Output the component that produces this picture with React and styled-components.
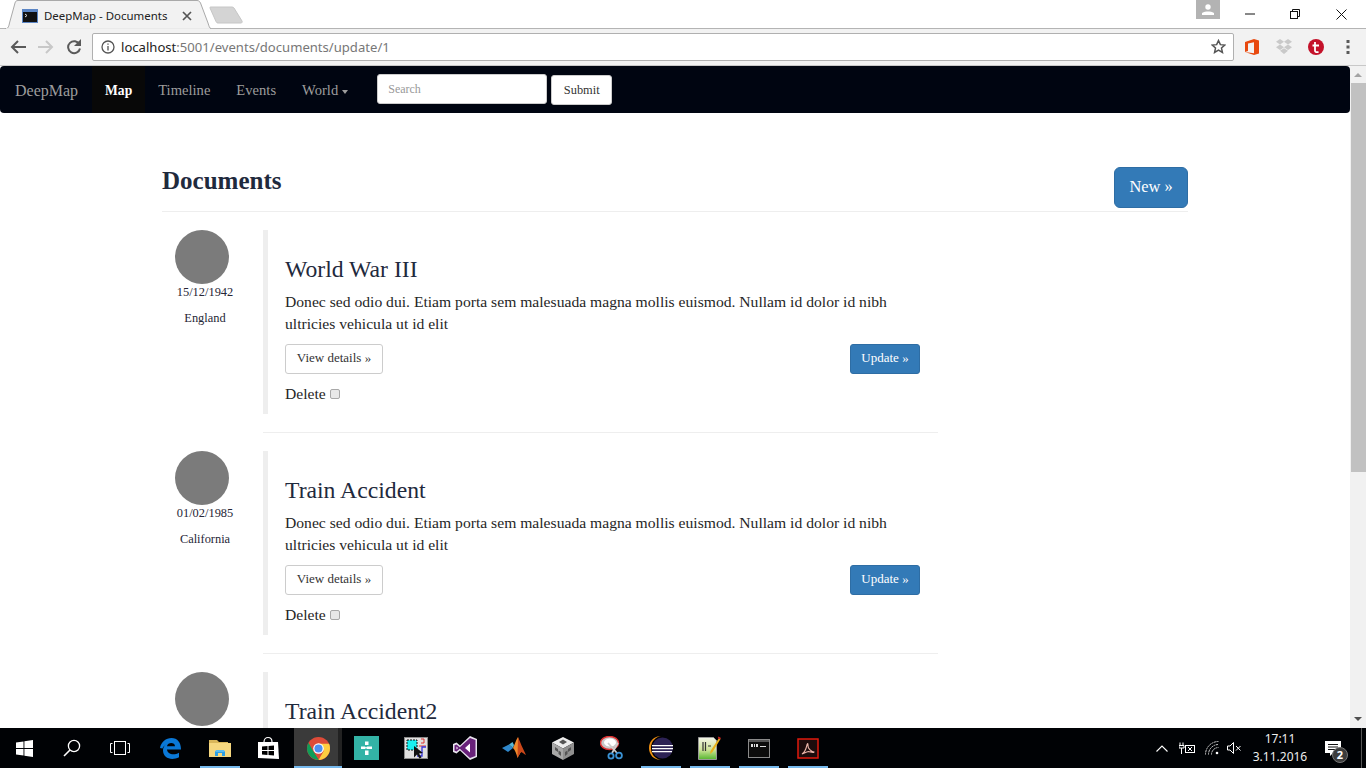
import React from "react";
import styled, { createGlobalStyle } from "styled-components";

const Global = createGlobalStyle`
  html, body { margin: 0; padding: 0; height: 100%; overflow: hidden; background: #fff; }
  #root { height: 100%; }
  * { box-sizing: border-box; }
`;

const serif = `"Liberation Serif", "Times New Roman", serif`;
const ui = `"Noto Sans", "Open Sans", sans-serif`;

const Screen = styled.div`
  width: 1366px; height: 768px; display: flex; flex-direction: column; overflow: hidden; background: #fff;
`;

/* browser chrome */
const TabStrip = styled.div`
  height: 29px; flex: none; display: flex; background: #fff; border-bottom: 1px solid #b4b4b4;
`;
const Tab = styled.div`
  position: relative; width: 206px; height: 29px; margin-left: 5px; display: flex; align-items: center;
  padding: 2px 0 0 17px; flex: none;
`;
const TabShape = styled.svg`
  position: absolute; left: 0; top: 0; width: 206px; height: 29px;
`;
const TabFavicon = styled.svg`
  position: relative; width: 16px; height: 14px; flex: none;
`;
const TabTitle = styled.span`
  position: relative; margin-left: 6px; font: 11.45px ${ui}; color: #222; width: 126px; white-space: nowrap;
`;
const TabClose = styled.svg`
  position: relative; width: 10px; height: 10px; margin-left: 12px;
`;
const NewTab = styled.svg`
  width: 36px; height: 18px; margin: 6px 0 0 -2px; flex: none;
`;
const WindowArea = styled.div`
  margin-left: auto; margin-right: 2px; display: flex; height: 28px;
`;
const Avatar = styled.div`
  width: 24px; height: 19px; background: #b3b3b3; display: flex; align-items: center; justify-content: center; margin-right: 6px;
`;
const WinBtn = styled.div`
  width: 46px; height: 28px; display: flex; align-items: center; justify-content: center; padding-left: ${p => p.$nudge || 0}px;
`;

const Toolbar = styled.div`
  height: 37px; flex: none; background: #f2f2f2; border-bottom: 1px solid #c8c8c8; display: flex; align-items: center;
  padding: 0 2px 1px 4px;
`;
const NavBtn = styled.div`
  width: 28px; height: 28px; display: flex; align-items: center; justify-content: center; flex: none;
`;
const Omnibox = styled.div`
  flex: 1; height: 28px; margin: 0 2px 0 4px; background: #fff; border: 1px solid #b0b0b0; border-radius: 2px;
  display: flex; align-items: center; padding: 0 7px 0 8px; font: 13.1px ${ui}; color: #777;
`;
const Host = styled.span` color: #222; `;
const Url = styled.span` margin-left: 6px; flex: 1; white-space: nowrap; `;
const ExtBtn = styled.div`
  width: 32px; height: 28px; display: flex; align-items: center; justify-content: center; flex: none;
`;

/* page */
const Viewport = styled.div`
  flex: 1; min-height: 0; display: flex; overflow: hidden;
`;
const Page = styled.div`
  flex: 1; min-width: 0; overflow: hidden; font-family: ${serif}; color: #262626;
`;
const Navbar = styled.nav`
  height: 47px; background: #000511; border-radius: 4px; display: flex; align-items: stretch; font-size: 14.6px;
`;
const Brand = styled.a`
  padding: 2px 14px 0 15px; font-size: 16px; color: #9d9d9d; display: flex; align-items: center; width: 92px;
`;
const NavLink = styled.a`
  padding: 2px 13px 0; display: flex; align-items: center; gap: 4px;
  color: ${p => (p.$active ? "#fff" : "#9d9d9d")};
  background: ${p => (p.$active ? "#080808" : "transparent")};
  font-weight: ${p => (p.$active ? 700 : 400)};
  font-size: ${p => (p.$active ? "13.6px" : "inherit")};
`;
const Caret = styled.span`
  width: 0; height: 0; border-top: 4px solid #9d9d9d; border-left: 3px solid transparent; border-right: 3px solid transparent; margin-top: 2px;
`;
const SearchForm = styled.form`
  display: flex; align-items: center; margin-left: 16px; gap: 4px;
`;
const SearchInput = styled.input`
  width: 170px; height: 30px; border: 1px solid #ccc; border-radius: 3px; padding: 0 10px; font: 12px ${serif}; background: #fff; margin-top: -1px;
  &::placeholder { color: #999; opacity: 1; }
`;
const SubmitBtn = styled.button`
  width: 61px; height: 30px; background: #fff; border: 1px solid #ccc; border-radius: 3px; font: 12.4px ${serif}; color: #333; padding: 0; margin-top: 1px;
`;
const Container = styled.main`
  width: 1026px; margin-left: 162px;
`;
const Header = styled.header`
  height: 99px; border-bottom: 1px solid #eee; display: flex; justify-content: space-between; align-items: flex-end; padding-bottom: 3px;
`;
const Title = styled.h2`
  margin: 0 0 14px; font-size: 25px; line-height: 27px; font-weight: 700; color: #1f2a3d;
`;
const NewBtn = styled.a`
  width: 74px; height: 41px; display: flex; align-items: center; justify-content: center; background: #337ab7; border: 1px solid #2e6da4;
  border-radius: 6px; color: #fff; font-size: 16.4px; padding-bottom: 2px;
`;
const Item = styled.article`
  display: grid; grid-template-columns: 86px 675px; column-gap: 15px; padding-top: 18px;
`;
const Side = styled.div`
  text-align: center; font-size: 12.4px; color: #262636;
`;
const Circle = styled.div`
  width: 54px; height: 54px; border-radius: 50%; background: #7b7b7b; margin-left: 13px;
`;
const DateLine = styled.div`
  line-height: 16px; margin-top: 0;
`;
const Place = styled.div`
  line-height: 16px; margin-top: 10px;
`;
const Main = styled.div`
  padding-bottom: 18px; border-bottom: 1px solid #eee;
`;
const Quote = styled.blockquote`
  margin: 0; border-left: 5px solid #eee; height: 184px; padding: 26px 18px 0 17px;
`;
const ItemTitle = styled.h3`
  margin: 0 0 9px; font-size: 23.7px; line-height: 26px; font-weight: 400; color: #1f2a3d;
`;
const Text = styled.p`
  margin: 0 0 9px; font-size: 15.63px; line-height: 22px;
`;
const Actions = styled.div`
  display: flex; justify-content: space-between; height: 30px;
`;
const ViewBtn = styled.a`
  width: 98px; height: 30px; display: flex; align-items: center; justify-content: center; border: 1px solid #ccc; border-radius: 3px;
  font-size: 13px; color: #333; padding-bottom: 2px;
`;
const UpdateBtn = styled.a`
  width: 70px; height: 30px; display: flex; align-items: center; justify-content: center; border: 1px solid #2e6da4; border-radius: 3px;
  background: #337ab7; color: #fff; font-size: 13px; padding-bottom: 2px;
`;
const DeleteRow = styled.label`
  display: flex; align-items: center; gap: 4px; margin-top: 10px; font-size: 15.6px; line-height: 20px;
`;
const Check = styled.input`
  appearance: none; width: 10px; height: 10px; margin: 0; background: #e8e8e8; border: 1px solid #a8a8a8; border-radius: 2px;
`;

const ScrollTrack = styled.div`
  width: 16px; flex: none; background: #f1f1f1; display: flex; flex-direction: column; align-items: center;
`;
const ScrollArrow = styled.svg`
  width: 16px; height: 17px; flex: none;
`;
const ScrollThumb = styled.div`
  width: 15px; height: 389px; background: #c1c1c1; flex: none;
`;
const ScrollRest = styled.div` flex: 1; `;

/* taskbar */
const Taskbar = styled.footer`
  height: 40px; flex: none; background: #000205; display: flex; align-items: stretch; color: #fff; font: 12px ${ui};
`;
const SystemBtn = styled.div`
  width: 48px; display: flex; align-items: center; justify-content: center; flex: none;
`;
const AppGroup = styled.div`
  display: flex; margin-left: 2px;
`;
const AppBtn = styled.div`
  position: relative; width: 49px; display: flex; align-items: center; justify-content: center; flex: none;
  padding-left: ${p => (p.$active ? 1 : 0)}px;
  background: ${p => (p.$active ? "linear-gradient(to right, transparent 1px, #3a3a3a 1px, #3a3a3a 45px, #222 45px)" : "transparent")};
  &::after {
    content: "";
    display: ${p => (p.$running ? "block" : "none")};
    position: absolute; bottom: 0; height: 2px; background: #76b9ed;
    left: ${p => (p.$active ? 1 : 5)}px; right: ${p => (p.$active ? 0 : 4)}px;
  }
`;
const Tray = styled.div`
  margin-left: auto; display: flex; align-items: center; padding-right: 4px;
`;
const TrayIcon = styled.div`
  width: ${p => p.$w || 24}px; display: flex; justify-content: center; align-items: center;
`;
const Clock = styled.div`
  width: 68px; margin-left: 2px; text-align: center; line-height: 18px; font-size: 12px; color: #eee;
`;
const Notify = styled.div`
  position: relative; width: 47px; height: 30px; display: flex; align-items: center; padding-left: 11px;
`;
const Badge = styled.span`
  position: absolute; left: 18px; top: 14px; width: 16px; height: 16px; border-radius: 50%; background: #3c3c3c; border: 1px solid #777;
  color: #fff; font: 700 11px/14px ${ui}; text-align: center;
`;
const TrayEdge = styled.div`
  width: 1px; background: #555; align-self: stretch;
`;

const I = {
  Start: () => (
    <svg width="17" height="17" viewBox="0 0 17 17" fill="#fff">
      <path d="M0 2.5 7.5 1.4V8H0zM8.4 1.3 17 0v8H8.4zM0 9h7.5v6.6L0 14.5zM8.4 9H17v8l-8.6-1.3z" />
    </svg>
  ),
  Search: () => (
    <svg width="18" height="18" viewBox="0 0 18 18" fill="none" stroke="#fff" strokeWidth="1.3">
      <circle cx="11" cy="7" r="5.6" /><path d="M7 11 1 17" strokeWidth="1.6" />
    </svg>
  ),
  TaskView: () => (
    <svg width="20" height="14" viewBox="0 0 20 14" fill="none" stroke="#fff" strokeWidth="1">
      <rect x="4.5" y=".5" width="11" height="13" /><path d="M2.5 2.5H.5v9h2M17.5 2.5h2v9h-2" />
    </svg>
  ),
  Edge: () => (
    <svg width="21" height="21" viewBox="0 0 21 21">
      <path fill="#0a78d7" d="M0 10C1 4 6 0 11.5 0 17.500 0 21 4.500 21 11.500H7c.3 4.500 6.500 6.500 12 3.200v4.600c-7 3.500-16 1.500-16-7 0-2.500 1-4.500 3-6-1.500 1.200-3 2.800-3.500 4.200zM7 8.200h8c0-4.200-7.300-4.200-8 0z" />
    </svg>
  ),
  Folder: () => (
    <svg width="22" height="18" viewBox="0 0 22 18">
      <path fill="#d9b65a" d="M0 1h8l2 2h9v3H0z" />
      <path fill="#f5d77f" d="M0 4h22v14H0z" />
      <path fill="#2f9fe3" d="M6 17v-5h10v5h-3v-3H9v3z" />
      <path fill="#5bbcf0" d="M7 11h8l1 2H6z" />
    </svg>
  ),
  Store: () => (
    <svg width="21" height="24" viewBox="0 0 21 24">
      <path fill="none" stroke="#fff" strokeWidth="1.200" d="M6 6c0-6 8-6 8 0" />
      <path fill="#fff" d="M0 6h20l1 17-21-1z" />
      <path fill="#000" d="M4 10.500 9.500 10v4H4zM10.500 10 16 9.500V14h-5.500zM4 15h5.500v4L4 18.500zM10.500 15H16v4.500l-5.500-.5z" />
    </svg>
  ),
  Chrome: () => (
    <svg width="23" height="23" viewBox="0 0 48 48">
      <circle cx="24" cy="24" r="24" fill="#dd4b39" />
      <path fill="#0f9d58" d="M3 12l12 21 10 15C11 48 0 37 0 24c0-4 1-8 3-12z" />
      <path fill="#ffcd40" d="M24 14h22c1.500 3 2 6.500 2 10 0 13-10.500 24-24 24l11-19z" />
      <circle cx="24" cy="24" r="11" fill="#fff" />
      <circle cx="24" cy="24" r="8.500" fill="#4d8ff0" />
    </svg>
  ),
  Teal: () => (
    <svg width="25" height="24" viewBox="0 0 25 24">
      <rect width="25" height="24" fill="#33b3a6" />
      <path fill="#fff" d="M11 5.500h3.500v3.500H11zM7 10.500h4l1 1 1-1h5v2.500h-5l-1-1-1 1H7zM11 14.500h3.500V19H11z" />
    </svg>
  ),
  Layout: () => (
    <svg width="24" height="22" viewBox="0 0 24 22">
      <rect width="24" height="22" fill="#8c8c8c" />
      <rect x="1" y="1" width="22" height="20" fill="#e0e0e0" />
      <path fill="none" stroke="#d33" d="M17 2h3v4h-3M15 9h7" />
      <path fill="none" stroke="#33d" strokeWidth="1.300" d="M22 10h-4v9h-5" />
      <rect x="3" y="3" width="10" height="10" fill="#19f0f0" stroke="#111" strokeDasharray="2 1" />
      <path fill="#111" d="M10 9l9 7-4 .5 2.500 4-2 1-2.500-4-3 3z" />
    </svg>
  ),
  VS: () => (
    <svg width="24" height="24" viewBox="0 0 24 24">
      <path fill="#e8e4ee" d="M17 0l7 3v18l-7 3L7 14.500 3.500 17.500 0 16V8l3.500-1.500L7 9.500z" />
      <path fill="#68217a" d="M17 2l5.500 2v16L17 22 6.800 12.800 3.500 15.500 1.500 14.800V9.200l2-.7 3.300 2.700z" />
      <path fill="#fff" d="M17 7.500 12 12l5 4.500zM3.500 10.500v3L5 12z" />
    </svg>
  ),
  Matlab: () => (
    <svg width="24" height="22" viewBox="0 0 24 22">
      <path fill="#2f88cc" d="M0 11l7-3.500 4 3.500-5 4z" />
      <path fill="#57b6d6" d="M7 7.500l3.500-2.500L12 8l-1 3z" />
      <path fill="#f08a2c" d="M16 0c-2 3-3.500 8-5 11 2 2 3.500 6 4.500 10 1-2 2.500-5 3.500-6z" />
      <path fill="#c9471a" d="M16 0c2 5 5 12 8 18-2-1-3.500-2.500-5-3-1 1.500-2.500 4-3.500 6z" />
    </svg>
  ),
  Cube: () => (
    <svg width="22" height="23" viewBox="0 0 22 23">
      <path fill="#ededed" d="M11 0l11 5.500-11 6-11-6z" />
      <path fill="#a8a8a8" d="M0 5.500l11 6V23L0 17z" />
      <path fill="#8f8f8f" d="M22 5.500l-11 6V23l11-6z" />
      <path fill="#555" d="M11 2.500l4 2.500-4 2.500-4-2.500zM3 10l3 2v3l-3-2zM19 10l-3 2v3l3-2zM9 15l-2.500-1.500V17L9 19zM13 15l2.500-1.500V17L13 19z" />
    </svg>
  ),
  Snip: () => (
    <svg width="23" height="24" viewBox="0 0 23 24">
      <ellipse cx="9.500" cy="7" rx="9" ry="6.500" fill="#c8c8c8" stroke="#d33" strokeWidth="1.500" />
      <ellipse cx="10" cy="6.500" rx="6" ry="4" fill="#fff" />
      <path d="M8 7l9 10M18 7 12 17" stroke="#ccc" strokeWidth="1.800" />
      <circle cx="11" cy="20" r="2.600" fill="none" stroke="#3a93d6" strokeWidth="1.800" />
      <circle cx="19" cy="19.500" r="2.900" fill="none" stroke="#3a93d6" strokeWidth="1.800" />
    </svg>
  ),
  Eclipse: () => (
    <svg width="24" height="24" viewBox="0 0 24 24">
      <path fill="#f29111" d="M12 0C5 0 0 5 0 12s5 12 12 12c-6-1-10-6-10-12S6 1 12 0z" />
      <circle cx="13.500" cy="12" r="10.500" fill="#2c2255" />
      <path fill="#fff" d="M3 9h21v1.300H3zM3 12h21v1.300H3zM3 15h20v1.300H3z" />
    </svg>
  ),
  Notepad: () => (
    <svg width="23" height="24" viewBox="0 0 23 24">
      <defs>
        <linearGradient id="npg" x1="0" y1="0" x2="0" y2="1">
          <stop offset="0" stopColor="#f3f5e8" /><stop offset=".55" stopColor="#cfe59a" /><stop offset="1" stopColor="#56b62f" />
        </linearGradient>
      </defs>
      <path fill="url(#npg)" stroke="#999" d="M.5 1.500h15l3 3v19H.5z" />
      <path stroke="#333" strokeWidth="1.200" d="M5 6v9M7.500 6v9M10 10h3" />
      <path fill="#e8b11a" d="M21 2l1.500 1-8 13-2.500 2 .5-3z" />
      <path fill="#c22" d="M20.500 .5 23 2l-1 1.500-2.200-1.500z" />
    </svg>
  ),
  Cmd: () => (
    <svg width="22" height="19" viewBox="0 0 22 19">
      <rect width="22" height="19" fill="#8a8a8a" />
      <rect x="1" y="1" width="20" height="2" fill="#555" />
      <rect x="1" y="3" width="20" height="15" fill="#0c0c0c" />
      <path fill="#ddd" d="M3 5h2v3H3zM6 5h1v3H6zM8 5h2v3H8zM12 7h6v1h-6z" />
    </svg>
  ),
  Acrobat: () => (
    <svg width="22" height="21" viewBox="0 0 22 21">
      <rect x="1" y="1" width="20" height="19" fill="#1c0c0c" stroke="#e01a0d" strokeWidth="1.500" />
      <path fill="none" stroke="#e8b4a8" strokeWidth="1.100" d="M5 16c2-1 4-5 5-9 .3-2 1.200-2 1 .5-.2 3 3 6 6 6.500 0 1-3 0-5.500-.5C9 14 6 16 5 16z" />
    </svg>
  ),
};

const apps = [
  ["Edge", false, false], ["Folder", true, false], ["Store", false, false], ["Chrome", true, true],
  ["Teal", false, false], ["Layout", false, false], ["VS", false, false], ["Matlab", false, false],
  ["Cube", false, false], ["Snip", false, false], ["Eclipse", true, false], ["Notepad", true, false],
  ["Cmd", true, false], ["Acrobat", true, false],
];

const body = "Donec sed odio dui. Etiam porta sem malesuada magna mollis euismod. Nullam id dolor id nibh ultricies vehicula ut id elit";
const docs = [
  { title: "World War III", date: "15/12/1942", place: "England", full: true },
  { title: "Train Accident", date: "01/02/1985", place: "California", full: true },
  { title: "Train Accident2" },
];

export default function App() {
  return (
    <Screen>
      <Global />
      <TabStrip>
        <Tab>
          <TabShape viewBox="0 0 206 29">
            <path d="M0 28.500h1.500C3 28.500 4 26 4.500 23L10 3c.5-1.500 1-2.500 3-2.500h179c2 0 2.500 1 3.500 2.500L203 23c1 3 1.500 5.500 3 5.500" fill="#f2f2f2" stroke="#a9a9a9" />
            <path d="M1 29h204" stroke="#f2f2f2" strokeWidth="1.500" />
          </TabShape>
          <TabFavicon viewBox="0 0 16 14">
            <rect width="16" height="14" fill="#5b85c4" />
            <rect x="1" y="3" width="14" height="10" fill="#111" />
            <path d="M3 5l2 1.500L3 8" stroke="#ddd" fill="none" />
          </TabFavicon>
          <TabTitle>DeepMap - Documents</TabTitle>
          <TabClose viewBox="0 0 10 10"><path d="M1 1l8 8M9 1l-8 8" stroke="#555" strokeWidth="1.700" /></TabClose>
        </Tab>
        <NewTab viewBox="0 0 36 18">
          <path d="M2 1h21c1 0 1.500.5 2 1l8 13c.5 1 0 2-1 2H9c-1 0-1.500-.5-2-1.500L1 2c-.3-.5 0-1 1-1z" fill="#d4d4d4" stroke="#c6c6c6" />
        </NewTab>
        <WindowArea>
          <Avatar>
            <svg width="12" height="11" viewBox="0 0 12 11" fill="#fff"><circle cx="6" cy="3" r="2.700" /><path d="M0 11V9c2-1.500 4-1.500 6-1.500s4 0 6 1.500v2z" /></svg>
          </Avatar>
          <WinBtn $nudge={2}><svg width="10" height="2" viewBox="0 0 10 2"><path d="M0 1h10" stroke="#111" /></svg></WinBtn>
          <WinBtn><svg width="10" height="10" viewBox="0 0 10 10" fill="none" stroke="#111"><path d="M2.500 2.500V.5h7v7h-2" /><rect x=".5" y="2.500" width="7" height="7" /></svg></WinBtn>
          <WinBtn><svg width="11" height="11" viewBox="0 0 11 11"><path d="M.5.500l10 10M10.500.500l-10 10" stroke="#111" /></svg></WinBtn>
        </WindowArea>
      </TabStrip>
      <Toolbar>
        <NavBtn><svg width="16" height="14" viewBox="0 0 16 14" fill="none" stroke="#5a5a5a" strokeWidth="2"><path d="M16 7H2M8 1 2 7l6 6" /></svg></NavBtn>
        <NavBtn><svg width="16" height="14" viewBox="0 0 16 14" fill="none" stroke="#c8c8c8" strokeWidth="2"><path d="M0 7h14M8 1l6 6-6 6" /></svg></NavBtn>
        <NavBtn><svg width="16" height="16" viewBox="0 0 16 16" fill="none"><path d="M13.500 5.500A6 6 0 1 0 14 9.500" stroke="#5a5a5a" strokeWidth="2" /><path d="M15 0v7H8z" fill="#5a5a5a" /></svg></NavBtn>
        <Omnibox>
          <svg width="14" height="14" viewBox="0 0 14 14" fill="none" stroke="#555" strokeWidth="1.300"><circle cx="7" cy="7" r="6" /><path d="M7 6v4.500M7 3.500v1.300" /></svg>
          <Url><Host>localhost</Host>:5001/events/documents/update/1</Url>
          <svg width="15" height="15" viewBox="0 0 24 24" fill="none" stroke="#555" strokeWidth="2.400"><path d="M12 2.500l3 6.500 7 .8-5.200 4.700 1.500 7L12 17.800 5.700 21.500l1.500-7L2 9.800 9 9z" /></svg>
        </Omnibox>
        <ExtBtn>
          <svg width="14" height="16" viewBox="0 0 14 16"><path fill="#e8490f" d="M0 3 9 0l5 1.500v13L9 16l-9-3 9 1.300V3.200L3 4.500v7.500L0 13z" /></svg>
        </ExtBtn>
        <ExtBtn>
          <svg width="16" height="15" viewBox="0 0 16 15" fill="#c9c9c9"><path d="M4 0l4 2.800L4 5.500 0 2.800zM12 0l4 2.800-4 2.700-4-2.700zM4 5.500l4 2.800-4 2.700-4-2.700zM12 5.500l4 2.800-4 2.700-4-2.700zM4 11.800l4-2.500 4 2.500L8 15z" /></svg>
        </ExtBtn>
        <ExtBtn>
          <svg width="16" height="16" viewBox="0 0 16 16"><circle cx="8" cy="8" r="8" fill="#c4122a" /><path d="M7 3v8.500c0 1.500 1 2 3.500 1.500M4.500 6.500H11" fill="none" stroke="#fff" strokeWidth="1.800" /></svg>
        </ExtBtn>
        <ExtBtn>
          <svg width="4" height="14" viewBox="0 0 4 14" fill="#5a5a5a"><rect x=".5" width="3" height="3" /><rect x=".5" y="5.500" width="3" height="3" /><rect x=".5" y="11" width="3" height="3" /></svg>
        </ExtBtn>
      </Toolbar>
      <Viewport>
        <Page>
          <Navbar>
            <Brand>DeepMap</Brand>
            <NavLink $active>Map</NavLink>
            <NavLink>Timeline</NavLink>
            <NavLink>Events</NavLink>
            <NavLink>World <Caret /></NavLink>
            <SearchForm>
              <SearchInput placeholder="Search" />
              <SubmitBtn type="button">Submit</SubmitBtn>
            </SearchForm>
          </Navbar>
          <Container>
            <Header>
              <Title>Documents</Title>
              <NewBtn>New »</NewBtn>
            </Header>
            {docs.map(d => (
              <Item key={d.title}>
                <Side>
                  <Circle />
                  {d.date && <DateLine>{d.date}</DateLine>}
                  {d.place && <Place>{d.place}</Place>}
                </Side>
                <Main>
                  <Quote>
                    <ItemTitle>{d.title}</ItemTitle>
                    {d.full && (
                      <>
                        <Text>{body}</Text>
                        <Actions>
                          <ViewBtn>View details »</ViewBtn>
                          <UpdateBtn>Update »</UpdateBtn>
                        </Actions>
                        <DeleteRow>Delete <Check type="checkbox" /></DeleteRow>
                      </>
                    )}
                  </Quote>
                </Main>
              </Item>
            ))}
          </Container>
        </Page>
        <ScrollTrack>
          <ScrollArrow viewBox="0 0 16 17"><path d="M4 11l4-4 4 4z" fill="#a3a3a3" /></ScrollArrow>
          <ScrollThumb />
          <ScrollRest />
          <ScrollArrow viewBox="0 0 16 17"><path d="M4 6l4 4 4-4z" fill="#505050" /></ScrollArrow>
        </ScrollTrack>
      </Viewport>
      <Taskbar>
        <SystemBtn><I.Start /></SystemBtn>
        <SystemBtn><I.Search /></SystemBtn>
        <SystemBtn><I.TaskView /></SystemBtn>
        <AppGroup>
          {apps.map(([name, running, active]) => {
            const Icon = I[name];
            return <AppBtn key={name} $running={running} $active={active}><Icon /></AppBtn>;
          })}
        </AppGroup>
        <Tray>
          <TrayIcon>
            <svg width="12" height="7" viewBox="0 0 12 7" fill="none" stroke="#fff" strokeWidth="1.100"><path d="M.5 6.500 6 1l5.500 5.500" /></svg>
          </TrayIcon>
          <TrayIcon $w={26}>
            <svg width="16" height="13" viewBox="0 0 16 13" fill="none" stroke="#fff"><path d="M1 .5v3M4 .5v3M0 3.500h5v2.500H0zM2.500 6v6" /><rect x="6.500" y="3.500" width="9" height="7" /><path d="M9 5l4 4M13 5l-4 4" /></svg>
          </TrayIcon>
          <TrayIcon>
            <svg width="14" height="14" viewBox="0 0 14 14" fill="none" stroke="#ccc"><path d="M.5 13.500a13 13 0 0 1 13-13M3.500 13.500a10 10 0 0 1 10-10M6.500 13.500a7 7 0 0 1 7-7" strokeDasharray="2 .6" /><circle cx="12" cy="12" r="1.300" fill="#fff" stroke="none" /></svg>
          </TrayIcon>
          <TrayIcon $w={20}>
            <svg width="15" height="12" viewBox="0 0 15 12" fill="none" stroke="#fff"><path d="M.5 4h2.500L6.500.5v11L3 8H.5zM9 4l4.500 4.500M13.500 4 9 8.500" /></svg>
          </TrayIcon>
          <Clock>17:11<br />3.11.2016</Clock>
          <Notify>
            <svg width="16" height="15" viewBox="0 0 16 15"><path fill="#fff" d="M0 0h16v12H8l-3 3v-3H0z" /><path d="M3 3.500h10M3 6h10M3 8.500h7" stroke="#111" /></svg>
            <Badge>2</Badge>
          </Notify>
          <TrayEdge />
        </Tray>
      </Taskbar>
    </Screen>
  );
}
